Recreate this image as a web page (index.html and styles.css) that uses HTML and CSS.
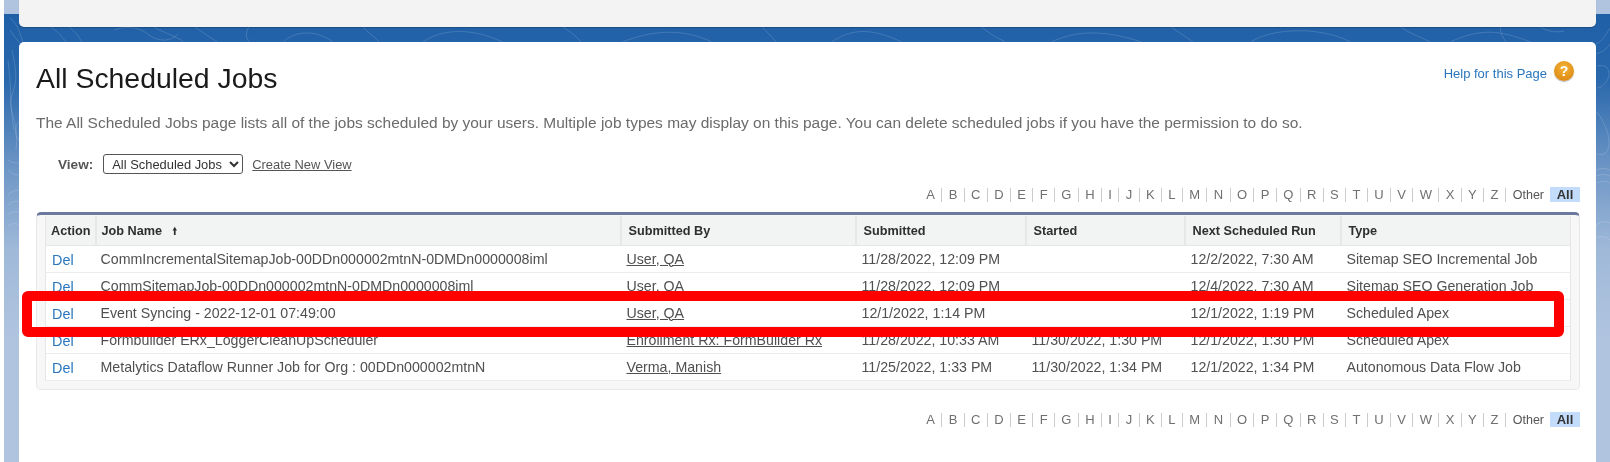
FILE: index.html
```html
<!DOCTYPE html>
<html lang="en">
<head>
<meta charset="utf-8">
<title>All Scheduled Jobs</title>
<link rel="stylesheet" href="styles.css">
</head>
<body>
<div class="stage">
  <svg class="contours" viewBox="0 0 1610 462" preserveAspectRatio="none" aria-hidden="true">
    <g fill="none" stroke="#ffffff" stroke-opacity=".15" stroke-width="1">
      <path d="M6 18C14 24 16 34 19 42"/>
      <path d="M6 30C10 36 14 42 19 46"/>
      <path d="M8 50C12 70 14 80 8 95S16 120 12 150"/>
      <path d="M4 60C8 90 6 110 10 130"/>
      <path d="M19 118c-10 6-10 22 0 24"/>
      <path d="M4 160c6 4 12 4 15 0M4 170c6 6 12 6 15 2"/>
      <path d="M4 195c6-6 12-6 15-2M4 205c6-6 12-4 15 0M4 215c4-4 10-4 15-2M4 226c6-4 10-2 15 0"/>
      <path d="M46 26c8 6 12 10 16 16M64 26c8 6 12 12 14 16M110 30c10-4 24-4 34 4s24 8 30 0M190 26c8 6 18 12 24 16M280 42c10-10 30-14 50 0M246 26c-4 6-4 12 0 16M420 42c20-14 50-14 80 0M620 42c30-12 60-14 90 0M830 42c20-14 40-14 70 0M1050 42c30-14 60-10 90 0M1250 42c20-14 70-16 100 0M1450 42c30-14 50-12 80 0"/>
      <path d="M150 27c15 8 25 10 30 15M360 27c5 6 12 10 16 15M560 27c10 6 14 10 18 15M760 27c6 6 10 10 14 15M980 27c10 8 14 10 24 15M1170 27c8 6 16 10 22 15M1400 27c8 6 20 10 30 15M1500 27c0 6 2 10 6 15M1540 27c6 4 16 6 24 4"/>
      <path d="M1596 44c6-2 10-10 14-16M1596 54c6-2 10-4 14-10"/>
      <path d="M1597 66c8-2 12 2 12 8s-6 14-12 14"/>
      <path d="M1597 112c6 8 12 20 12 30s-4 14-12 12"/>
      <path d="M1596 170c6-2 10-2 14 0M1596 176c6-2 10-2 14 0M1596 183c6-2 10-2 14 0"/>
      <path d="M1596 225c6-4 10-4 14-2M1596 238c4-2 10-2 14 2"/>
    </g>
  </svg>
  <div class="sheet">
    <div class="card card-top"></div>
    <main class="card card-main">
      <header class="page-head">
        <h1 class="page-title">All Scheduled Jobs</h1>
        <div class="help">
          <a class="help-link" href="#">Help for this Page</a>
          <span class="help-icon">?</span>
        </div>
      </header>
      <p class="intro">The All Scheduled Jobs page lists all of the jobs scheduled by your users. Multiple job types may display on this page. You can delete scheduled jobs if you have the permission to do so.</p>
      <div class="view-row">
        <label class="view-label" for="view">View:</label>
        <select class="view-select" id="view"><option>All Scheduled Jobs</option></select>
        <a class="view-link" href="#">Create New View</a>
      </div>
      <nav class="alpha">
        <a href="#">A</a><a href="#">B</a><a href="#">C</a><a href="#">D</a><a href="#">E</a><a href="#">F</a><a href="#">G</a><a href="#">H</a><a href="#">I</a><a href="#">J</a><a href="#">K</a><a href="#">L</a><a href="#">M</a><a href="#">N</a><a href="#">O</a><a href="#">P</a><a href="#">Q</a><a href="#">R</a><a href="#">S</a><a href="#">T</a><a href="#">U</a><a href="#">V</a><a href="#">W</a><a href="#">X</a><a href="#">Y</a><a href="#">Z</a><span class="alpha-other">Other</span><span class="alpha-all">All</span>
      </nav>
      <div class="list-box">
        <table class="jobs">
          <colgroup>
            <col class="c-action"><col class="c-name"><col class="c-by"><col class="c-sub"><col class="c-start"><col class="c-next"><col class="c-type">
          </colgroup>
          <thead>
            <tr><th>Action</th><th>Job Name <span class="sort">&#129049;</span></th><th>Submitted By</th><th>Submitted</th><th>Started</th><th>Next Scheduled Run</th><th>Type</th></tr>
          </thead>
          <tbody>
            <tr><td><a class="del" href="#">Del</a></td><td>CommIncrementalSitemapJob-00DDn000002mtnN-0DMDn0000008iml</td><td><a class="user" href="#">User, QA</a></td><td>11/28/2022, 12:09 PM</td><td></td><td>12/2/2022, 7:30 AM</td><td>Sitemap SEO Incremental Job</td></tr>
            <tr><td><a class="del" href="#">Del</a></td><td>CommSitemapJob-00DDn000002mtnN-0DMDn0000008iml</td><td><a class="user" href="#">User, QA</a></td><td>11/28/2022, 12:09 PM</td><td></td><td>12/4/2022, 7:30 AM</td><td>Sitemap SEO Generation Job</td></tr>
            <tr><td><a class="del" href="#">Del</a></td><td>Event Syncing - 2022-12-01 07:49:00</td><td><a class="user" href="#">User, QA</a></td><td>12/1/2022, 1:14 PM</td><td></td><td>12/1/2022, 1:19 PM</td><td>Scheduled Apex</td></tr>
            <tr><td><a class="del" href="#">Del</a></td><td>Formbuilder ERx_LoggerCleanUpScheduler</td><td><a class="user" href="#">Enrollment Rx: FormBuilder Rx</a></td><td>11/28/2022, 10:33 AM</td><td>11/30/2022, 1:30 PM</td><td>12/1/2022, 1:30 PM</td><td>Scheduled Apex</td></tr>
            <tr><td><a class="del" href="#">Del</a></td><td>Metalytics Dataflow Runner Job for Org : 00DDn000002mtnN</td><td><a class="user" href="#">Verma, Manish</a></td><td>11/25/2022, 1:33 PM</td><td>11/30/2022, 1:34 PM</td><td>12/1/2022, 1:34 PM</td><td>Autonomous Data Flow Job</td></tr>
          </tbody>
        </table>
      </div>
      <nav class="alpha alpha-bottom">
        <a href="#">A</a><a href="#">B</a><a href="#">C</a><a href="#">D</a><a href="#">E</a><a href="#">F</a><a href="#">G</a><a href="#">H</a><a href="#">I</a><a href="#">J</a><a href="#">K</a><a href="#">L</a><a href="#">M</a><a href="#">N</a><a href="#">O</a><a href="#">P</a><a href="#">Q</a><a href="#">R</a><a href="#">S</a><a href="#">T</a><a href="#">U</a><a href="#">V</a><a href="#">W</a><a href="#">X</a><a href="#">Y</a><a href="#">Z</a><span class="alpha-other">Other</span><span class="alpha-all">All</span>
      </nav>
    </main>
    <div class="highlight"></div>
  </div>
</div>
</body>
</html>
```

FILE: styles.css
```css
* { box-sizing: border-box; }
html, body { margin: 0; height: 462px; overflow: hidden; background: #fff; }
body { font-family: "Liberation Sans", Arial, sans-serif; color: #3a3a3a; }

.stage {
  position: relative;
  margin-left: 4px;
  height: 462px;
  padding: 0 14px 0 15px;
  overflow: hidden;
  filter: blur(.45px);
  background: linear-gradient(180deg, #b0c4df 0, #b0c4df 14px, #1f5fa6 14px, #2a68ac 80px, #6f97c6 170px, #a0b9d9 250px, #b0c4df 340px, #b0c4df 462px);
}
.contours { position: absolute; inset: 0; width: 100%; height: 100%; }
.sheet { position: relative; height: 462px; }

.card { background: #fff; border-radius: 5px; }
.card-top { height: 27px; margin-bottom: 15px; background: #f3f3f3; border-radius: 0 0 5px 5px; box-shadow: 0 1px 1px rgba(0,0,0,.2); }
.card-main { height: 420px; border-radius: 5px 5px 0 0; padding: 16px 16px 0 17px; }

.page-head { display: flex; justify-content: space-between; align-items: flex-start; height: 40px; padding-right: 6px; }
.page-title { margin: 0; font-weight: 400; font-size: 28.4px; line-height: 40px; color: #1a1a1a; }
.help { display: flex; align-items: center; gap: 7px; margin-top: 3px; }
.help-link { color: #2a76bd; font-size: 13px; text-decoration: none; margin-top: 4px; }
.help-icon {
  display: flex; align-items: center; justify-content: center;
  width: 20px; height: 20px; border-radius: 50%;
  background: radial-gradient(circle at 50% 35%, #f6b335, #d67f0c);
  color: #fff; font-weight: 700; font-size: 14px;
  box-shadow: 0 1px 1px rgba(0,0,0,.3);
}

.intro { margin: 16px 0 0; font-size: 15.47px; line-height: 18px; color: #6b6b6b; }

.view-row { display: flex; align-items: center; height: 20px; margin: 22px 0 0 22px; font-size: 13.6px; }
.view-label { font-weight: 700; color: #555; margin-right: 10px; }
.view-select {
  width: 140px; height: 20px; padding: 0 0 0 4px;
  font: 12.9px "Liberation Sans", Arial, sans-serif; color: #333;
  background: #fff; border: 1px solid #555; border-radius: 3px;
}
.view-link { margin-left: 9px; color: #555; font-size: 12.9px; }

.alpha { display: flex; justify-content: flex-end; align-items: center; height: 15px; margin-top: 13px; font-size: 13px; }
.alpha a { color: #707070; text-decoration: none; padding: 0 6.37px; border-right: 1px solid #ccc; line-height: 14px; }
.alpha-other { color: #555; font-size: 12.5px; padding: 0 6px 0 7px; }
.alpha-all { width: 30px; height: 15px; line-height: 15px; text-align: center; font-weight: 700; color: #333; background: #c3dcfb; }
.alpha-bottom { margin-top: 22px; }

.list-box {
  margin-top: 10px;
  padding: 1px 8px 8px;
  height: 178px;
  background: #f7f7f7;
  border: 1px solid #e8e8e8;
  border-top: 3px solid #6b7a9c;
  border-radius: 5px;
}
.jobs { width: 100%; table-layout: fixed; border-collapse: collapse; background: #fff; font-size: 14.2px; color: #505050; border: 1px solid #e6e6e6; border-top: 0; }
.c-action { width: 50px; }
.c-name { width: 525px; }
.c-by { width: 235px; }
.c-sub { width: 170px; }
.c-start { width: 159px; }
.c-next { width: 156px; }
.jobs th {
  height: 29px; padding: 2px 7px 0; text-align: left; font-size: 12.7px; line-height: 14px; font-weight: 700; color: #2f2f2f;
  background: #f2f3f3; border-left: 2px solid #e6e8e8; border-bottom: 1px solid #e6e6e6; white-space: nowrap;
}
.jobs th:first-child { border-left: 0; padding-left: 5px; }
.jobs th:nth-child(2) { padding-left: 5px; }
.sort { margin-left: 6px; font-size: 11px; line-height: 1; font-weight: 400; font-family: "DejaVu Sans", sans-serif; }
.jobs td { height: 27px; padding: 0 6px; border-bottom: 1px solid #ececec; white-space: nowrap; overflow: hidden; }
.jobs td:first-child { padding-left: 6px; }
.jobs td:nth-child(2) { padding-left: 5px; }
.del { color: #2a76bd; text-decoration: none; font-size: 14.4px; position: relative; top: 1px; }
.user { color: #505050; }

.highlight {
  position: absolute; left: 3px; top: 291px; width: 1542px; height: 46px;
  border: 10px solid #ff0000; border-radius: 6px;
}
```
